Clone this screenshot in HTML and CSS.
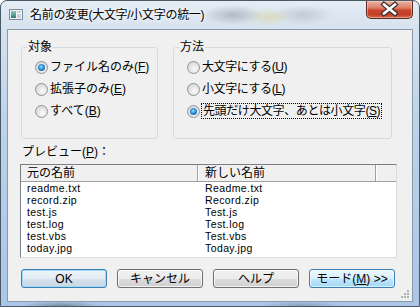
FILE: index.html
```html
<!DOCTYPE html>
<html lang="ja">
<head>
<meta charset="UTF-8" />
<title>名前の変更(大文字/小文字の統一)</title>
<link rel="stylesheet" href="styles.css">
</head>
<body>
  <div class="window">
    <div class="titlebar">
      <svg class="app-icon" width="14" height="11" viewBox="0 0 14 11" aria-hidden="true">
        <defs>
          <linearGradient id="teal" x1="0" y1="0" x2="0" y2="1">
            <stop offset="0" stop-color="#8fc7c0"/>
            <stop offset="1" stop-color="#2f7d6f"/>
          </linearGradient>
        </defs>
        <rect x="0.5" y="0.5" width="13" height="10" fill="#eef2f5" stroke="#7d8c99"/>
        <rect x="2" y="2" width="5" height="7" fill="url(#teal)"/>
        <rect x="8" y="2" width="4" height="7" fill="#c9d2da"/>
        <rect x="8" y="4" width="4" height="1" fill="#ffffff"/>
      </svg>
      <span class="title">名前の変更(大文字/小文字の統一)</span>
      <div class="close" aria-label="閉じる">
        <svg width="47" height="18" viewBox="0 0 47 18" aria-hidden="true">
          <path d="M18 4.5 L29 13.5 M29 4.5 L18 13.5" stroke="#3d3030" stroke-width="5" stroke-linecap="square"/>
          <path d="M18 4.5 L29 13.5 M29 4.5 L18 13.5" stroke="#ffffff" stroke-width="2.6" stroke-linecap="square"/>
        </svg>
      </div>
    </div>

    <div class="client">
      <div class="groups">
        <fieldset class="group g-target">
          <legend>対象</legend>
          <label class="opt"><span class="radio checked"></span><span>ファイル名のみ(<u>F</u>)</span></label>
          <label class="opt"><span class="radio"></span><span>拡張子のみ(<u>E</u>)</span></label>
          <label class="opt"><span class="radio"></span><span>すべて(<u>B</u>)</span></label>
        </fieldset>
        <fieldset class="group g-method">
          <legend>方法</legend>
          <label class="opt"><span class="radio"></span><span>大文字にする(<u>U</u>)</span></label>
          <label class="opt"><span class="radio"></span><span>小文字にする(<u>L</u>)</span></label>
          <label class="opt"><span class="radio checked"></span><span class="focus">先頭だけ大文字、あとは小文字(<u>S</u>)</span></label>
        </fieldset>
      </div>

      <div class="preview-label">プレビュー(<u>P</u>)：</div>

      <div class="list">
        <div class="list-head">
          <span class="col1">元の名前</span>
          <span class="col2">新しい名前</span>
          <span class="col3"></span>
        </div>
        <div class="row"><span class="col1">readme.txt</span><span class="col2">Readme.txt</span></div>
        <div class="row"><span class="col1">record.zip</span><span class="col2">Record.zip</span></div>
        <div class="row"><span class="col1">test.js</span><span class="col2">Test.js</span></div>
        <div class="row"><span class="col1">test.log</span><span class="col2">Test.log</span></div>
        <div class="row"><span class="col1">test.vbs</span><span class="col2">Test.vbs</span></div>
        <div class="row"><span class="col1">today.jpg</span><span class="col2">Today.jpg</span></div>
      </div>

      <div class="buttons">
        <button class="btn default">OK</button>
        <button class="btn">キャンセル</button>
        <button class="btn">ヘルプ</button>
        <button class="btn hot">モード(<u>M</u>) &gt;&gt;</button>
      </div>

      <svg class="grip" width="10" height="10" viewBox="0 0 10 10" aria-hidden="true">
        <g fill="#a9b0b6">
          <rect x="7" y="1" width="2" height="2"/>
          <rect x="4" y="4" width="2" height="2"/>
          <rect x="7" y="4" width="2" height="2"/>
          <rect x="1" y="7" width="2" height="2"/>
          <rect x="4" y="7" width="2" height="2"/>
          <rect x="7" y="7" width="2" height="2"/>
        </g>
      </svg>
    </div>
  </div>
</body>
</html>
```

FILE: styles.css
```css
* {
  box-sizing: border-box;
}
body {
  margin: 0;
  font-family: "Liberation Sans", "Noto Sans CJK JP", sans-serif;
  font-size: 12px;
  color: #000;
  background: #fff;
}
u {
  text-decoration: underline;
  text-underline-offset: 1px;
}

/* window frame */
.window {
  width: 420px;
  height: 307px;
  display: flex;
  flex-direction: column;
  border: 1px solid #4a5968;
  border-radius: 7px 7px 0 0;
  overflow: hidden;
  background:
    radial-gradient(ellipse 30px 10px at 232px 14px, rgba(110, 120, 130, 0.4), transparent),
    radial-gradient(ellipse 22px 9px at 268px 16px, rgba(215, 200, 110, 0.4), transparent),
    radial-gradient(ellipse 30px 10px at 302px 14px, rgba(140, 150, 160, 0.35), transparent),
    radial-gradient(ellipse 40px 5px at 60px 305px, rgba(60, 70, 80, 0.45), transparent),
    radial-gradient(ellipse 40px 5px at 300px 305px, rgba(60, 70, 80, 0.3), transparent),
    linear-gradient(to bottom, #e4ecf4 0, #d6e2ee 28px, #bcd3ea 120px, #a9c6e6 100%);
}
.titlebar {
  height: 28px;
  display: flex;
  align-items: flex-start;
}
.app-icon {
  margin: 8px 0 0 8px;
  flex: none;
}
.title {
  margin: 6px 0 0 7px;
  line-height: 16px;
  letter-spacing: -0.3px;
  text-shadow: 0 0 6px #fff, 0 0 3px #fff;
}
.close {
  margin-left: auto;
  margin-right: 6px;
  width: 47px;
  height: 18px;
  border: 1px solid #5a2b22;
  border-top: none;
  border-radius: 0 0 5px 5px;
  background: linear-gradient(to bottom, #eab3a6 0, #dc7d66 40%, #c9442b 55%, #c13f27 80%, #d8704f 100%);
  box-shadow: inset 0 0 0 1px rgba(255, 220, 210, 0.45);
}
.close svg {
  display: block;
  margin: -1px 0 0 -1px;
}

/* client area */
.client {
  position: relative;
  flex: 1;
  margin: 0 6px 4px 6px;
  border: 1px solid #8b9aab;
  background: #f0f0f0;
  display: flex;
  flex-direction: column;
}
.groups {
  display: flex;
  gap: 15px;
  margin: 9px 0 0 13px;
}
.group {
  margin: 0;
  padding: 1px 0 16px 0;
  border: 1px solid #d2dbe2;
  border-radius: 3px;
  min-width: 0;
}
.g-target {
  width: 137px;
}
.g-method {
  width: 219px;
}
.group legend {
  margin-left: 5px;
  padding: 0 1px;
  line-height: 16px;
}
.opt {
  display: flex;
  align-items: center;
  gap: 2px;
  height: 22px;
  padding-left: 13px;
  line-height: 14px;
  white-space: nowrap;
}
.g-method .opt {
  letter-spacing: -0.4px;
}
.radio {
  flex: none;
  width: 13px;
  height: 13px;
  border-radius: 50%;
  border: 1px solid #8e9396;
  background: radial-gradient(circle at 60% 65%, #fbfbfb 0, #e6e6e6 45%, #cfcfcf 100%);
  display: flex;
  align-items: center;
  justify-content: center;
}
.radio.checked::after {
  content: "";
  width: 7px;
  height: 7px;
  border-radius: 50%;
  background: radial-gradient(circle at 45% 40%, #9fe0ff 0, #3c9ee0 35%, #1a5f9e 80%, #144a7e 100%);
}
.focus {
  outline: 1px dotted #000;
  outline-offset: 0;
  padding: 0 1px;
}

/* preview list */
.preview-label {
  margin: 5px 0 0 14px;
  line-height: 16px;
}
.list {
  margin: 4px 0 0 12px;
  width: 377px;
  height: 94px;
  background: #fff;
  border: 1px solid;
  border-color: #7a7f85 #dcdcdc #dcdcdc #7a7f85;
  overflow: hidden;
}
.list-head {
  display: flex;
  height: 17px;
  background: #f0f0f0;
  border-bottom: 1px solid #a0a0a0;
  line-height: 16px;
}
.list-head span {
  border-right: 1px solid #a0a0a0;
  box-shadow: 1px 0 0 #fff;
}
.list-head .col3 {
  flex: 1;
  border-right: none;
  box-shadow: none;
}
.col1 {
  width: 177px;
  padding-left: 6px;
  flex: none;
}
.col2 {
  width: 178px;
  padding-left: 7px;
  flex: none;
}
.row {
  display: flex;
  height: 12px;
  line-height: 12px;
  font-size: 10.5px;
  letter-spacing: 0.4px;
  white-space: nowrap;
}

/* buttons */
.buttons {
  display: flex;
  gap: 10px;
  margin: 11px 0 0 13px;
}
.btn {
  width: 86px;
  height: 19px;
  padding: 0;
  font: inherit;
  color: #000;
  border: 1px solid #707070;
  border-radius: 3px;
  background: linear-gradient(to bottom, #f2f2f2 0, #ebebeb 50%, #dddddd 51%, #cfcfcf 100%);
  box-shadow: inset 0 0 0 1px rgba(255, 255, 255, 0.75);
  line-height: 16px;
}
.btn.default {
  border-color: #3c7fb1;
  background: linear-gradient(to bottom, #edf3f8 0, #e3ecf3 50%, #d5e1eb 51%, #c9d8e5 100%);
  box-shadow: inset 0 0 0 1px #9fdcf9;
}
.btn.hot {
  border-color: #3c7fb1;
  background: linear-gradient(to bottom, #eaf6fd 0, #d9f0fc 50%, #bee6fd 51%, #a7d9f5 100%);
  box-shadow: inset 0 0 0 1px rgba(255, 255, 255, 0.6);
}
.grip {
  position: absolute;
  right: 2px;
  bottom: 2px;
}
```
